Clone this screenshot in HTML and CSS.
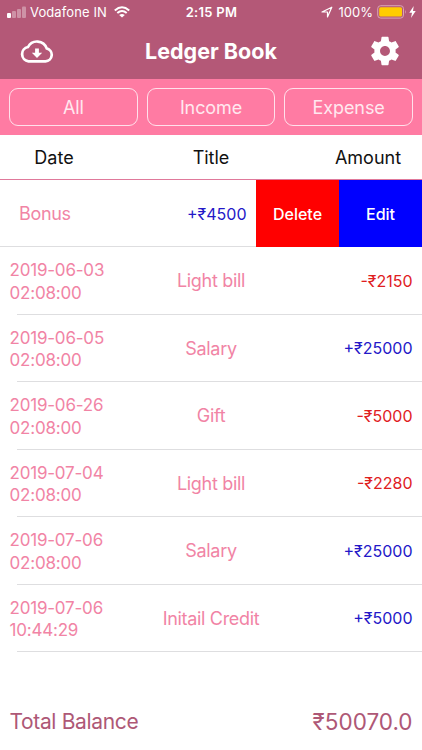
FILE: index.html
```html
<!DOCTYPE html>
<html lang="en">
<head>
<meta charset="utf-8">
<title>Ledger Book</title>
<link rel="stylesheet" href="styles.css">
</head>
<body>
<header class="top">
  <div class="status">
    <div class="carrier">
      <svg class="signal" width="19" height="12" viewBox="0 0 19 12" fill="#fff"><rect x="0" y="7" width="4" height="5" rx="1"/><g opacity=".35"><rect x="5" y="5" width="4" height="7" rx="1"/><rect x="10" y="3" width="4" height="9" rx="1"/><rect x="15" y="0.5" width="4" height="11.5" rx="1"/></g></svg>
      <span>Vodafone IN</span>
      <svg class="wifi" width="16" height="12" viewBox="0 0 16 12" fill="none" stroke="#fff" stroke-width="2"><path d="M.8 4.4Q8-2 15.200 4.400M3.300 7Q8 3 12.700 7"/><path d="M8 11.600L5.200 8.900Q8 6.900 10.800 8.900Z" fill="#fff" stroke="none"/></svg>
    </div>
    <div class="clock">2:15 PM</div>
    <div class="power">
      <svg class="locate" width="12" height="12" viewBox="0 0 12 12" fill="none" stroke="#fff" stroke-width="1.200" stroke-linejoin="round"><path d="M1 6L10.800 1.200L6.500 11V6Z"/></svg>
      <span>100%</span>
      <svg class="battery" width="30" height="14" viewBox="0 0 30 14"><rect x=".7" y=".7" width="25.800" height="12.400" rx="3" fill="none" stroke="#d9a5b6" stroke-width="1"/><rect x="2.200" y="2.200" width="22.800" height="9.400" rx="1.500" fill="#fc0"/><path d="M28 4.800Q29.500 7 28 9Z" fill="#d9a5b6"/></svg>
      <svg class="bolt" width="7" height="12" viewBox="0 0 7 12" fill="#fff"><path d="M4.700 0L.3 6.700H3L2 12L6.700 5H4Z"/></svg>
    </div>
  </div>
  <div class="nav">
    <svg class="cloud" width="34" height="23" viewBox="0 0 34 23"><path d="M8.500 21.400H25.500A6.600 6.600 0 0 0 26.700 8.400A10.200 10.200 0 0 0 8 7A7.300 7.300 0 0 0 8.500 21.400Z" fill="none" stroke="#fff" stroke-width="2.700"/><path d="M15.100 8.500H18.900V12.700H22.200L17 18L11.800 12.700H15.100Z" fill="#fff"/></svg>
    <h1>Ledger Book</h1>
    <svg class="gear" width="34" height="34" viewBox="0 0 24 24" fill="#fff"><path d="M19.430 12.980c.04-.32.07-.64.07-.98s-.03-.66-.07-.98l2.110-1.650c.19-.15.24-.42.12-.64l-2-3.460c-.12-.22-.39-.3-.61-.22l-2.490 1c-.52-.4-1.080-.73-1.690-.98l-.38-2.650C14.460 2.180 14.250 2 14 2h-4c-.25 0-.46.18-.49.42l-.38 2.650c-.61.25-1.170.59-1.690.98l-2.490-1c-.23-.09-.49 0-.61.22l-2 3.460c-.13.22-.07.49.12.64l2.110 1.650c-.04.32-.07.65-.07.98s.03.66.07.98l-2.110 1.650c-.19.15-.24.42-.12.64l2 3.460c.12.22.39.3.61.22l2.490-1c.52.4 1.080.73 1.690.98l.38 2.650c.03.24.24.42.49.42h4c.25 0 .46-.18.49-.42l.38-2.650c.61-.25 1.170-.59 1.690-.98l2.490 1c.23.09.49 0 .61-.22l2-3.460c.12-.22.07-.49-.12-.64l-2.110-1.650zM12 15.500c-1.930 0-3.500-1.570-3.500-3.500s1.570-3.500 3.500-3.500 3.500 1.570 3.500 3.500-1.570 3.500-3.500 3.500z"/></svg>
  </div>
</header>
<div class="filters"><button>All</button><button>Income</button><button>Expense</button></div>
<div class="heads"><span>Date</span><span>Title</span><span>Amount</span></div>
<main>
  <div class="swiped">
    <span class="title">Bonus</span><span class="amount credit">+₹4500</span>
    <button class="delete">Delete</button><button class="edit">Edit</button>
  </div>
  <div class="row"><span class="date">2019-06-03<br>02:08:00</span><span class="title">Light bill</span><span class="amount debit">-₹2150</span></div>
  <div class="row"><span class="date">2019-06-05<br>02:08:00</span><span class="title">Salary</span><span class="amount credit">+₹25000</span></div>
  <div class="row"><span class="date">2019-06-26<br>02:08:00</span><span class="title">Gift</span><span class="amount debit">-₹5000</span></div>
  <div class="row"><span class="date">2019-07-04<br>02:08:00</span><span class="title">Light bill</span><span class="amount debit">-₹2280</span></div>
  <div class="row"><span class="date">2019-07-06<br>02:08:00</span><span class="title">Salary</span><span class="amount credit">+₹25000</span></div>
  <div class="row"><span class="date">2019-07-06<br>10:44:29</span><span class="title">Initail Credit</span><span class="amount credit">+₹5000</span></div>
</main>
<footer><span>Total Balance</span><span class="total">₹50070.0</span></footer>
</body>
</html>
```
FILE: styles.css
```css
* { box-sizing: border-box; }
body { margin: 0; width: 422px; height: 750px; overflow: hidden; display: flex; flex-direction: column; background: #fff; font-family: Inter, "Liberation Sans", sans-serif; }
svg { display: block; flex: none; }
button { font: inherit; color: #fff; padding: 0; border: 0; }
.top { height: 79px; background: #b45877; color: #fff; flex: none; }
.status { height: 24px; display: grid; grid-template-columns: 1fr auto 1fr; align-items: center; font-size: 13px; line-height: 24px; padding: 0 6px 0 7px; }
.carrier, .power { display: flex; align-items: center; }
.carrier span { margin: 0 7px 0 4px; letter-spacing: .1px; }
.clock { font-weight: 600; letter-spacing: .3px; }
.power { justify-content: flex-end; }
.power span { margin: 0 4px 0 6px; }
.bolt { margin-left: 2px; }
.nav { height: 54px; display: grid; grid-template-columns: 1fr auto 1fr; align-items: center; padding: 0 20px; }
h1 { margin: 0; font-size: 21.500px; font-weight: 700; line-height: 30px; }
.gear { justify-self: end; }
.filters { height: 56px; background: #ff7ba3; display: grid; grid-template-columns: repeat(3, 1fr); gap: 9px; padding: 9px; flex: none; }
.filters button { height: 38px; border: 1px solid #ffe1eb; border-radius: 9px; background: none; color: #ffe8ef; font-size: 18px; letter-spacing: -.1px; }
.heads { height: 45px; display: grid; grid-template-columns: 108px 1fr 108px; align-items: center; text-align: center; font-size: 18px; color: #111; border-bottom: 1px solid #e0799b; flex: none; }
.swiped { height: 67px; display: grid; grid-template-columns: 1fr auto 83px 83px; align-items: center; border-bottom: 1px solid #dedee0; }
.swiped .title { padding-left: 19px; text-align: left; }
.swiped button { height: 67px; align-self: start; font-size: 16px; font-weight: 500; }
.swiped .amount { padding-right: 9.500px; }
.delete { background: #f00; }
.edit { background: #00f; }
.row { height: 67.500px; display: grid; grid-template-columns: 122px 1fr 122px; align-items: center; padding: 0 9.500px; background: linear-gradient(#dedee0, #dedee0) 17px 100% / 100% 1px no-repeat; }
.date, .title { color: #f184a5; }
.date { font-size: 17px; line-height: 22.500px; letter-spacing: -.2px; padding-top: 2px; }
.title { font-size: 18px; letter-spacing: -.32px; text-align: center; }
.amount { font-size: 16px; text-align: right; }
.credit { color: #2418c8; }
.debit { color: #df201f; }
footer { margin-top: auto; height: 57px; display: flex; align-items: center; justify-content: space-between; padding: 0 9.500px; color: #ae5876; font-size: 21px; letter-spacing: -.35px; }
.total { font-size: 22.500px; letter-spacing: 0; }
```
